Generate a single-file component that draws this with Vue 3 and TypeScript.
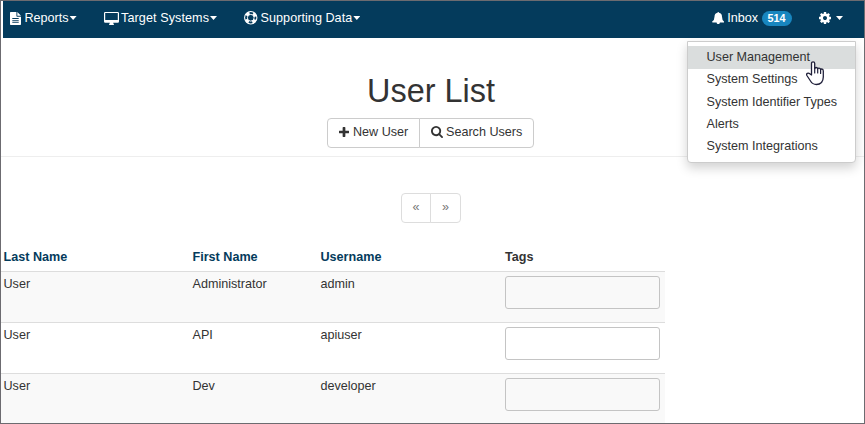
<script setup lang="ts">
interface User {
  last: string
  first: string
  username: string
}

const users: User[] = [
  { last: 'User', first: 'Administrator', username: 'admin' },
  { last: 'User', first: 'API', username: 'apiuser' },
  { last: 'User', first: 'Dev', username: 'developer' },
]

const settingsMenu: string[] = [
  'User Management',
  'System Settings',
  'System Identifier Types',
  'Alerts',
  'System Integrations',
]
</script>

<template>
  <div class="page">
    <nav class="navbar">
      <a class="nav-item reports">
        <svg class="icon file" viewBox="0 0 12 14"><path fill-rule="evenodd" d="M.8 0H7v4.2q0 .8.8.8H12v8.2q0 .8-.8.8H.8Q0 14 0 13.200V.8Q0 0 .8 0ZM8 0l4 4H8ZM2.500 6.500v1h7v-1Zm0 2v1h7v-1Zm0 2v1h7v-1Z" /></svg>
        <span>Reports</span><i class="caret"></i>
      </a>
      <a class="nav-item targets">
        <svg class="icon desktop" viewBox="0 0 15 13"><path fill-rule="evenodd" d="M1.200 0h12.600Q15 0 15 1.200v8.300q0 1.200-1.200 1.200H9.200q0 .8.6 1.300.3.300.2.600-.1.400-.5.400h-4q-.4 0-.5-.4-.1-.3.200-.6.6-.5.6-1.300H1.200Q0 10.700 0 9.500V1.200Q0 0 1.200 0ZM1.200 1.100v7h12.600v-7Z" /></svg>
        <span>Target Systems</span><i class="caret"></i>
      </a>
      <a class="nav-item data">
        <svg class="icon ring" viewBox="0 0 14 14">
          <circle cx="7" cy="7" r="6.400" fill="none" stroke="currentColor" stroke-width="1.100" />
          <circle cx="7" cy="7" r="3.500" fill="none" stroke="currentColor" stroke-width="1" />
          <circle cx="7" cy="7" r="5" fill="none" stroke="currentColor" stroke-width="3" stroke-dasharray="3.927 3.927" stroke-dashoffset="-1.963" />
        </svg>
        <span>Supporting Data</span><i class="caret"></i>
      </a>
      <a class="nav-item inbox">
        <svg class="icon bell" viewBox="0 0 13 13"><path d="M6.500 0q.8 0 .8.900 3.100.6 3.100 4 0 3.700 2.600 5.200 0 .8-.9.800H8.200q-.1 1.700-1.700 1.700T4.800 10.900H.9Q0 10.900 0 10.100q2.600-1.500 2.600-5.200 0-3.400 3.100-4Q5.700 0 6.500 0Z" /></svg>
        <span>Inbox</span><span class="badge">514</span>
      </a>
      <a class="nav-item settings">
        <svg class="icon cog" viewBox="128 128 1536 1536"><path d="M1152 896q0-106-75-181t-181-75-181 75-75 181 75 181 181 75 181-75 75-181zm512-109v222q0 12-8 23t-20 13l-185 28q-19 54-39 91 35 50 107 138 10 12 10 25t-9 23q-27 37-99 108t-94 71q-12 0-26-9l-138-108q-44 23-91 38-16 136-29 186-7 28-36 28h-222q-14 0-24.500-8.500t-11.500-21.500l-28-184q-49-16-90-37l-141 107q-10 9-25 9-14 0-25-11-126-114-165-168-7-10-7-23 0-12 8-23 15-21 51-66.500t54-70.500q-27-50-41-99l-183-27q-13-2-21-12.500t-8-23.500v-222q0-12 8-23t19-13l186-28q14-46 39-92-40-57-107-138-10-12-10-24 0-10 9-23 26-36 98.500-107.500t94.500-71.500q13 0 26 10l138 107q44-23 91-38 16-136 29-186 7-28 36-28h222q14 0 24.500 8.500t11.500 21.500l28 184q49 16 90 37l142-107q9-9 24-9 13 0 25 10 129 119 165 170 7 8 7 22 0 12-8 23-15 21-51 66.500t-54 70.500q26 50 41 98l183 28q13 2 21 12.500t8 23.500z" /></svg>
        <i class="caret"></i>
      </a>
    </nav>

    <header class="page-header">
      <h1>User List</h1>
      <div class="btn-group">
        <button class="btn new-user">
          <svg class="icon plus" viewBox="192 128 1408 1408"><path d="M1600 736v192q0 40-28 68t-68 28h-416v416q0 40-28 68t-68 28h-192q-40 0-68-28t-28-68v-416h-416q-40 0-68-28t-28-68v-192q0-40 28-68t68-28h416v-416q0-40 28-68t68-28h192q40 0 68 28t28 68v416h416q40 0 68 28t28 68z" /></svg>
          <span>New User</span>
        </button>
        <button class="btn search">
          <svg class="icon glass" viewBox="64 128 1664 1664"><path d="M1216 832q0-185-131.500-316.500t-316.500-131.500-316.500 131.500-131.500 316.500 131.500 316.500 316.500 131.500 316.500-131.500 131.500-316.500zm512 832q0 52-38 90t-90 38q-54 0-90-38l-343-342q-179 124-399 124-143 0-273.500-55.500t-225-150-150-225-55.500-273.500 55.500-273.500 150-225 225-150 273.500-55.500 273.500 55.500 225 150 150 225 55.500 273.500q0 220-124 399l343 343q37 37 37 90z" /></svg>
          <span>Search Users</span>
        </button>
      </div>
    </header>

    <div class="pager">
      <button>«</button>
      <button>»</button>
    </div>

    <section class="table">
      <div class="row head">
        <a>Last Name</a><a>First Name</a><a>Username</a><span>Tags</span>
      </div>
      <div v-for="user in users" :key="user.username" class="row">
        <span>{{ user.last }}</span>
        <span>{{ user.first }}</span>
        <span>{{ user.username }}</span>
        <div class="tags"></div>
      </div>
    </section>

    <div class="dropdown">
      <a v-for="(item, index) in settingsMenu" :key="item" :class="{ active: index === 0 }">{{ item }}</a>
    </div>

    <svg class="cursor" viewBox="0 0 20 25">
      <path d="M5.500 14V2.400Q5.500.8 7.100.8T8.700 2.400V7.500Q8.900 6.500 10.100 6.500 11.500 6.500 11.700 7.800 12 7.200 13 7.200 14.300 7.200 14.600 8.600 15 8 15.800 8 17.300 8 17.300 10V16Q17.300 19 15.500 21.500 13.500 23.500 10.500 23.500 6.500 23.500 4.500 20L.9 14.500Q.2 13 1.300 12.400 2.600 11.800 3.800 12.800Z" fill="#fff" stroke="#20203a" stroke-width="1.300" stroke-linejoin="round" />
      <path d="M8.700 7v5M11.700 8V12M14.600 9V12.500" fill="none" stroke="#20203a" stroke-width="1.200" stroke-linecap="round" />
    </svg>
  </div>
</template>

<style>
body {
  background: #fff;
}
</style>

<style scoped>
.page {
  position: relative;
  box-sizing: border-box;
  width: 865px;
  height: 424px;
  overflow: hidden;
  border: 1px solid #6c6b70;
  background: #fff;
  color: #333;
  font: 12.6px/18px "Liberation Sans", Arial, sans-serif;
}
.icon {
  display: block;
  flex: none;
  fill: currentColor;
}
.navbar {
  display: flex;
  align-items: flex-start;
  height: 37px;
  margin-left: 2px;
  padding-left: 7px;
  box-sizing: border-box;
  background: #043b5c;
  color: #fff;
}
.nav-item {
  display: flex;
  align-items: center;
  height: 18px;
  margin-top: 8px;
  white-space: nowrap;
}
.file { width: 11px; height: 13px; margin-right: 3.500px; }
.desktop { width: 15px; height: 13px; margin-right: 2px; }
.ring { width: 13.500px; height: 13.500px; margin-right: 3px; }
.bell { width: 12.500px; height: 12.500px; margin-right: 3px; }
.cog { width: 12px; height: 12px; margin-right: 4px; }
.targets { margin-left: 27.500px; }
.targets span { letter-spacing: 0.080px; }
.data { margin-left: 27px; }
.data span { letter-spacing: 0.050px; }
.inbox { margin-left: auto; }
.settings { margin-left: 27.500px; margin-right: 21px; }
.caret {
  width: 7px;
  height: 4px;
  margin-left: 1px;
  background: currentColor;
  clip-path: polygon(0 0, 100% 0, 50% 100%);
}
.badge {
  box-sizing: border-box;
  width: 30px;
  height: 15px;
  margin: 1px 0 0 3.500px;
  border-radius: 9px;
  background: #1886bf;
  font-size: 10.800px;
  font-weight: bold;
  line-height: 15px;
  text-align: center;
}
.page-header {
  display: flex;
  flex-direction: column;
  align-items: center;
  height: 119px;
  box-sizing: border-box;
  padding: 35px 3px 0 0;
  border-bottom: 1px solid #eee;
}
h1 {
  margin: 0 0 9px;
  font-size: 32.400px;
  font-weight: 400;
  line-height: 36px;
}
.btn-group {
  display: flex;
  margin-right: 1px;
}
.btn {
  display: flex;
  align-items: center;
  box-sizing: border-box;
  height: 30px;
  padding: 0 0 3px 11px;
  border: 1px solid #ccc;
  background: #fff;
  color: #333;
  font: inherit;
  white-space: nowrap;
}
.new-user { width: 93px; border-radius: 4px 0 0 4px; }
.search { width: 115px; margin-left: -1px; border-radius: 0 4px 4px 0; }
.plus { width: 10px; height: 10px; margin-right: 4px; }
.glass { width: 12px; height: 12px; margin-right: 3px; }
.pager {
  display: flex;
  width: 60px;
  height: 30px;
  margin: 36px 0 0 400px;
}
.pager button {
  box-sizing: border-box;
  width: 30px;
  padding: 0 0 2px;
  border: 1px solid #ddd;
  border-radius: 4px 0 0 4px;
  background: #fff;
  color: #777;
  font: inherit;
}
.pager button + button {
  width: 31px;
  flex: none;
  margin-left: -1px;
  border-radius: 0 4px 4px 0;
}
.table {
  width: 664px;
  margin-top: 22px;
}
.row {
  display: grid;
  grid-template-columns: 189px 128px 184.500px 155px;
  box-sizing: border-box;
  height: 51px;
  padding: 3px 0 0 2.500px;
  border-top: 1px solid #ddd;
}
.row:nth-child(even) {
  background: #f9f9f9;
}
.row.head {
  height: 26px;
  padding-top: 3px;
  border: 0;
  font-weight: bold;
}
.head a {
  color: #043b5c;
}
.tags {
  box-sizing: border-box;
  height: 33px;
  margin-top: 1px;
  border: 1px solid #c4c4c4;
  border-radius: 3px;
}
.dropdown {
  position: absolute;
  top: 40px;
  left: 686px;
  box-sizing: border-box;
  width: 169px;
  height: 122px;
  padding: 4px 0;
  border: 1px solid #ccc;
  border-radius: 0 0 4px 4px;
  background: #fff;
  box-shadow: 0 5px 11px rgba(0, 0, 0, 0.18);
}
.dropdown a {
  display: block;
  height: 22.250px;
  padding-left: 18.500px;
  line-height: 22px;
}
.dropdown a.active {
  height: 23px;
  margin-bottom: -0.750px;
  background: #dadddd;
}
.cursor {
  position: absolute;
  top: 60px;
  left: 805px;
  width: 20px;
  height: 25px;
}
</style>
